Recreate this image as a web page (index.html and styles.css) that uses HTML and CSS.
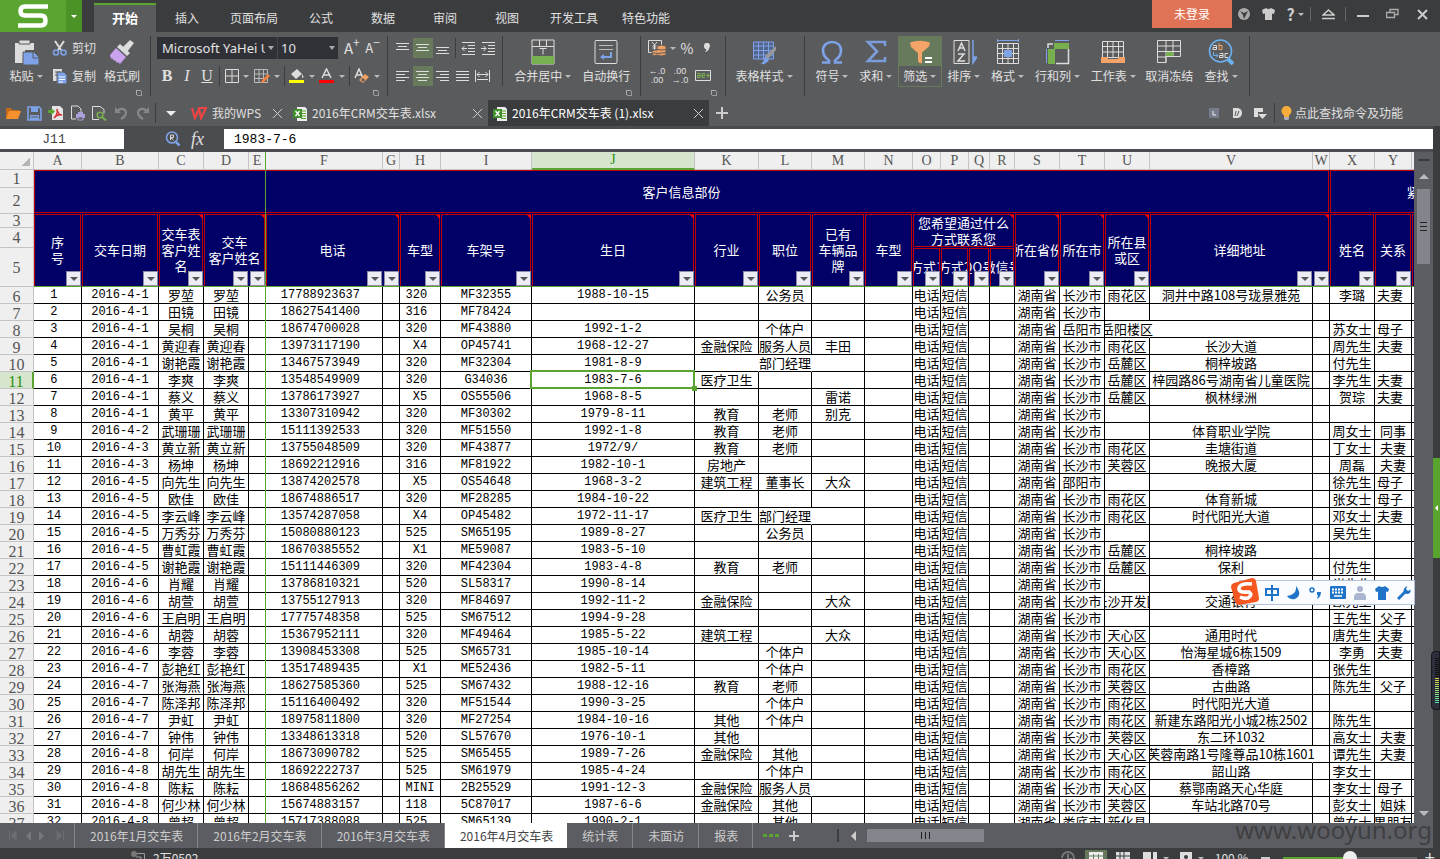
FILE: index.html
```html
<!DOCTYPE html>
<html lang="zh-CN">
<head>
<meta charset="UTF-8">
<meta name="viewport" content="width=device-width, initial-scale=1.0">
<title>2016年CRM交车表 (1).xlsx</title>
<link rel="stylesheet" href="styles.css">
</head>

<body>
<header class="titlebar">
    <button class="logo" aria-label="WPS">
        <svg width="66" height="32" viewBox="0 0 66 32"><path d="M48 6.500H25q-4.500 0-4.500 4.500t4.500 4.500h16q4.500 0 4.500 5t-4.500 5H18" fill="none" stroke="#fff" stroke-width="4.500"/></svg>
        <span class="logo-drop"><i class="arrow"></i></span>
    </button>
    <nav class="menu">
        <a class="active" href="#">开始</a>
        <a href="#">插入</a>
        <a class="wide" href="#">页面布局</a>
        <a href="#">公式</a>
        <a href="#">数据</a>
        <a href="#">审阅</a>
        <a href="#">视图</a>
        <a class="wide" href="#">开发工具</a>
        <a class="wide" href="#">特色功能</a>
    </nav>
    <div class="window-tools">
        <button class="login">未登录</button>
        <button class="w24" aria-label="皮肤"><svg width="12" height="12"><circle cx="6" cy="6" r="6" fill="#aaa"/><path d="M2 3l4 2 4-2-2 4-2 4-1-4z" fill="#3b3c3e"/></svg></button>
        <button class="w24" aria-label="换肤"><svg width="13" height="12"><path d="M4 0q2.500 2 5 0l4 2-1 4-2-.5V12H3V5.500L1 6 0 2z" fill="#ccc"/></svg></button>
        <button class="w30 help" aria-label="帮助">?<i class="arrow"></i></button>
        <i class="sep"></i>
        <button class="w34" aria-label="收起"><svg width="13" height="12"><path d="M1 7l5.500-5L12 7zM0 10.500h13" fill="none" stroke="#ccc" stroke-width="1.600"/></svg></button>
        <i class="sep"></i>
        <button class="w34" aria-label="最小化"><svg width="13" height="12"><path d="M0 8h12" stroke="#ccc" stroke-width="2"/></svg></button>
        <button class="w24" aria-label="还原"><svg width="13" height="12"><path d="M4 4V1.500h8v5H9M.5 4.500h8v5h-8z" fill="none" stroke="#aaa" stroke-width="1.400"/></svg></button>
        <button class="w36" aria-label="关闭"><svg width="11" height="11"><path d="M1 1l9 9M10 1l-9 9" stroke="#ccc" stroke-width="2"/></svg></button>
    </div>
</header>

<section class="ribbon">
    <div class="group clip-group">
        <button class="big w44">
            <svg width="26" height="26"><path d="M2 4h4V1h11v3h4v7h-9v13H2z" fill="#ddd"/><path d="M6 5h11V1H6z" fill="#ddd" stroke="#5a5b5d"/><path d="M10 13h11l5 5v8H10z" fill="#7da2e8" stroke="#5a5b5d"/><path d="M20 13v6h6" fill="none" stroke="#5a5b5d"/></svg>
            <span>粘贴<i class="arrow"></i></span>
        </button>
        <div class="stack">
            <button class="small"><svg width="16" height="16"><path d="M3 1l6 9M12 1L6 10" stroke="#ddd" stroke-width="2"/><circle cx="4" cy="12.500" r="2.500" fill="none" stroke="#7da2e8" stroke-width="1.600"/><circle cx="11.500" cy="12.500" r="2.500" fill="none" stroke="#7da2e8" stroke-width="1.600"/></svg>剪切</button>
            <button class="small"><svg width="16" height="16"><path d="M1 1h9v12H1z" fill="#ddd"/><path d="M3 4h5M3 7h3" stroke="#5a5b5d"/><path d="M5 4h7l3 3v9H5z" fill="#7da2e8" stroke="#5a5b5d"/><path d="M7 9h6M7 11.500h6M7 14h4" stroke="#fff"/></svg>复制</button>
        </div>
        <button class="big w48">
            <svg width="26" height="26"><path d="M21 1l4 3-7 9-5-4z" fill="#ddd"/><path d="M11 5l10 9-3 3L8 8z" fill="#ddd"/><path d="M7 9l10 9-6 7-2-2-1 1-2-3-1 1-2-3-1 1-1-4z" fill="#c9a3ee"/></svg>
            <span>格式刷</span>
        </button>
        <i class="launcher"></i>
    </div>
    <div class="group font-group">
        <div class="line">
            <select class="combo font-name" aria-label="字体"><option>Microsoft YaHei UI</option></select>
            <select class="combo font-size" aria-label="字号"><option>10</option></select>
            <button class="tool grow-font" aria-label="增大字号">A<sup>+</sup></button>
            <button class="tool shrink-font" aria-label="减小字号">A<sup>−</sup></button>
        </div>
        <div class="line">
            <button class="tool letter"><b>B</b></button>
            <button class="tool letter"><em>I</em></button>
            <button class="tool letter"><u>U</u></button>
            <i class="sep"></i>
            <button class="tool drop" aria-label="边框"><svg width="14" height="14"><path d="M.5.5h13v13H.5zM7 0v14M0 7h14" fill="none" stroke="#ddd"/></svg><i class="arrow"></i></button>
            <button class="tool drop" aria-label="绘图边框"><svg width="16" height="15"><path d="M.5.5h13v13H.5zM5 0v14M9.500 0v14M0 5h14M0 9.500h14" fill="none" stroke="#bbb"/><path d="M7 14l1-3 6-6 2 2-6 6z" fill="#f0803c"/></svg><i class="arrow"></i></button>
            <i class="sep"></i>
            <button class="tool drop" aria-label="填充颜色"><svg width="16" height="16"><path d="M2 6l6-5 5 5-6 5z" fill="#ddd"/><path d="M13 6q3 4 0 4z" fill="#ddd"/><path d="M0 12h15v3H0z" fill="#ff0"/></svg><i class="arrow"></i></button>
            <button class="tool drop" aria-label="字体颜色"><svg width="16" height="16"><path d="M3 10L7.500 1 12 10M5 7h5" fill="none" stroke="#ddd" stroke-width="1.500"/><path d="M0 12h15v3H0z" fill="red"/></svg><i class="arrow"></i></button>
            <i class="sep"></i>
            <button class="tool drop" aria-label="清除"><svg width="16" height="16"><path d="M1 10L5 1l4 9M2 7h6" fill="none" stroke="#ddd" stroke-width="1.500"/><path d="M5 12l6-6 4 3-6 6z" fill="#f0a060"/><path d="M7 12l2-2 2 2-2 2z" fill="#5a5b5d"/></svg><i class="arrow"></i></button>
        </div>
        <i class="launcher"></i>
    </div>
    <div class="group align-group">
        <div class="align">
            <div class="line">
                <button class="tool" aria-label="顶端对齐"><svg width="14" height="16"><path d="M0 3.500h13M2 6.500h9M0 9.500h13" stroke="#ddd"/></svg></button>
                <button class="tool on" aria-label="垂直居中"><svg width="14" height="16"><path d="M0 4.500h13M2 7.500h9M0 10.500h13" stroke="#ddd"/></svg></button>
                <button class="tool" aria-label="底端对齐"><svg width="14" height="16"><path d="M0 7.500h13M2 10.500h9M0 13.500h13" stroke="#ddd"/></svg></button>
                <i class="sep"></i>
                <button class="tool" aria-label="减少缩进"><svg width="14" height="14"><path d="M1 1.500h13M7 4.500h7M7 7.500h7M7 10.500h7M1 13.500h13M1 7.500h5M3.500 5L1 7.500 3.500 10" fill="none" stroke="#ddd"/></svg></button>
                <button class="tool" aria-label="增加缩进"><svg width="14" height="14"><path d="M1 1.500h13M7 4.500h7M7 7.500h7M7 10.500h7M1 13.500h13M0 7.500h5M2.500 5L5 7.500 2.500 10" fill="none" stroke="#ddd"/></svg></button>
            </div>
            <div class="line">
                <button class="tool" aria-label="左对齐"><svg width="14" height="12"><path d="M0 1.500h13M0 4.500h9M0 7.500h13M0 10.500h9" stroke="#ddd"/></svg></button>
                <button class="tool on" aria-label="居中"><svg width="14" height="12"><path d="M0 1.500h13M2 4.500h9M0 7.500h13M2 10.500h9" stroke="#ddd"/></svg></button>
                <button class="tool" aria-label="右对齐"><svg width="14" height="12"><path d="M0 1.500h13M4 4.500h9M0 7.500h13M4 10.500h9" stroke="#ddd"/></svg></button>
                <button class="tool" aria-label="两端对齐"><svg width="14" height="12"><path d="M0 1.500h13M0 4.500h13M0 7.500h13M0 10.500h13" stroke="#ddd"/></svg></button>
                <button class="tool" aria-label="分散对齐"><svg width="16" height="12"><path d="M.5 0v12M14.500 0v12M2 4.500h11M4.500 2L2 4.500 4.500 7M10.500 2L13 4.500 10.500 7M2 9.500h11" fill="none" stroke="#ddd"/></svg></button>
            </div>
        </div>
        <i class="sep tall"></i>
        <button class="big w68">
            <svg width="26" height="26"><path d="M2 1h22v24H2z" fill="none" stroke="#ddd"/><path d="M2 7.500h22M9.500 1v6M16.500 1v6M9.500 9.500h7M13 9.500v6" fill="none" stroke="#ddd"/><path d="M2 17h22v8H2z" fill="#78b050"/></svg>
            <span>合并居中<i class="arrow"></i></span>
        </button>
        <button class="big w60">
            <svg width="26" height="26"><rect x="2" y="1.500" width="22" height="23" rx="1" fill="none" stroke="#ddd"/><path d="M6 6.500h14M6 10.500h14" stroke="#bbb"/><path d="M18 13v5H9" fill="none" stroke="#7da2e8" stroke-width="2"/><path d="M11 15l-4 3 4 3z" fill="#7da2e8"/></svg>
            <span>自动换行</span>
        </button>
        <i class="launcher"></i>
    </div>
    <div class="group number-group">
        <div class="line">
            <button class="tool drop" aria-label="货币"><svg width="18" height="17"><path d="M.5.5h13v12H.5z" fill="none" stroke="#ddd"/><path d="M4 2l2.500 3L9 2M6.500 5v5M4.500 6h4M4.500 8h4" stroke="#ddd" fill="none"/><path d="M9 6q4.500-2 9 0v9q-4.500 2-9 0-2 1.500-5 0v-4q2-1 5-1z" fill="#f0a060" stroke="#5a5b5d"/><path d="M9 9.500q4 1 9 0M4 13q7 1 14-.5" fill="none" stroke="#5a5b5d"/></svg><i class="arrow"></i></button>
            <button class="tool percent">%</button>
            <button class="tool comma" aria-label="千位分隔"><svg width="8" height="10"><path d="M1 3a3 3 0 1 1 5 2q0 3-4 4 2-2 1-3-2 0-2-3z" fill="#ddd"/></svg></button>
        </div>
        <div class="line decimals">
            <button class="tool"><span>←.0<br>.00</span></button>
            <button class="tool"><span>.00<br>→.0</span></button>
            <button class="tool" aria-label="ae"><svg width="17" height="12"><path d="M.5.5h15v10H.5z" fill="none" stroke="#ddd"/><path d="M2 3.500h3v4H2.500v-2H5M10 7.500H7v-4h2.500v2H7M11 5.500h4M13 3.500v4" fill="none" stroke="#78b050"/></svg></button>
        </div>
        <i class="launcher"></i>
    </div>
    <div class="group style-group">
        <button class="big w68">
            <svg width="26" height="26"><path d="M2.500 3h20v17h-20zM2.500 7h20M2.500 11.500h20M2.500 16h20M7.500 3v17M12.500 3v17M17.500 3v17" fill="#54658c" stroke="#7da2e8"/><path d="M25 7v4l-8 9-3-3z" fill="#999"/><path d="M14 17l4 4q-3 5-8 4 3-2 4-8z" fill="#7da2e8"/></svg>
            <span>表格样式<i class="arrow"></i></span>
        </button>
    </div>
    <div class="group edit-group">
        <button class="big w44"><svg width="26" height="26"><path d="M3 23.500h7v-2C5 18 4 15 4 11.500 4 6 8 3 13 3s9 3 9 8.500c0 3.500-1 6.500-6 10v2h7" fill="none" stroke="#7da2e8" stroke-width="2.600"/></svg><span>符号<i class="arrow"></i></span></button>
        <button class="big w44"><svg width="26" height="26"><path d="M22 7V3H5l9 9.500L5 22h17v-4" fill="none" stroke="#7c9ddb" stroke-width="2.600"/></svg><span>求和<i class="arrow"></i></span></button>
        <button class="big w44 picked"><svg width="26" height="26"><path d="M3 3.500q10-3.500 20 0l-1 4-7 6V24q-3 1-4-2v-8L4 8z" fill="#f4a468"/><path d="M18 19h7M18 23h7" stroke="#fff" stroke-width="2"/></svg><span>筛选<i class="arrow"></i></span></button>
        <button class="big w44"><svg width="26" height="26"><path d="M3 1.500h15v23H3z" fill="none" stroke="#ddd"/><path d="M7 12l3.500-8L14 12M8 9h5M7 15h6l-6 7h7" fill="none" stroke="#ddd" stroke-width="1.500"/><path d="M22 1v23M22 24v-6h4z" fill="#7da2e8" stroke="#7da2e8" stroke-width="1.500"/></svg><span>排序<i class="arrow"></i></span></button>
        <button class="big w44"><svg width="26" height="26"><path d="M2.500 4.500h21v20h-21zM2.500 9.500h21M2.500 14.500h21M2.500 19.500h21M7.500 4.500v20M13 4.500v20M18.500 4.500v20" fill="none" stroke="#ddd"/><path d="M2 1.500h22M2.500 0v3M23.500 0v3" stroke="#7da2e8"/><path d="M9 11h8v7H9z" fill="#7da2e8"/></svg><span>格式<i class="arrow"></i></span></button>
        <button class="big w56"><svg width="26" height="26"><path d="M11 1.500h14M2.500 10v14" stroke="#7da2e8"/><path d="M10 4h15v6H10zM4 10h7v15H4z" fill="#78b050"/><path d="M4 9V5h5M24.500 10v14.500H12" fill="none" stroke="#ddd" stroke-width="1.500"/></svg><span>行和列<i class="arrow"></i></span></button>
        <button class="big w56"><svg width="26" height="26"><path d="M2.500 2.500h21v16h-21zM2.500 7.500h21M2.500 13h21M7.500 2.500v16M13 2.500v16M18.500 2.500v16" fill="none" stroke="#ddd"/><path d="M1 18h7v2h10v-2h7v6H1z" fill="#f4a468"/></svg><span>工作表<i class="arrow"></i></span></button>
        <button class="big w56"><svg width="26" height="26"><path d="M1.500 1.500h23v16H10v6H1.500zM1.500 7h23M1.500 12.500h23M1.500 18H10M10 1.500v22M17 1.500v16" fill="none" stroke="#ddd"/><path d="M10 13h7v4h-7z" fill="#78b050"/></svg><span>取消冻结</span></button>
        <button class="big w48"><svg width="26" height="26"><circle cx="12.500" cy="12" r="11" fill="none" stroke="#6cb0f0" stroke-width="1.600"/><path d="M20 20l5 5" stroke="#6cb0f0" stroke-width="4"/><path d="M5 6.500h3.500v4H5v-2h3.500" fill="none" stroke="#ddd"/><path d="M11 4v6.500h3v-4h-3" fill="none" stroke="#f4a468"/><path d="M5.500 13v3.500h4M8 14.500l2 2-2 2" fill="none" stroke="#6cb0f0"/><path d="M11.500 14.500h3.500v4h-3.500v-2h3.500M20 14.500h-3v4h3" fill="none" stroke="#ddd"/></svg><span>查找<i class="arrow"></i></span></button>
    </div>
</section>

<section class="docbar">
    <div class="quick">
        <button aria-label="打开"><svg width="16" height="14"><path d="M1 12V2h5l1 2h7v2" fill="#c46a1c"/><path d="M4 5h12l-3 8H1z" fill="#f5922f"/></svg></button>
        <button aria-label="保存"><svg width="15" height="15"><path d="M1 1h11l2 2v11H1z" fill="none" stroke="#7da2e8" stroke-width="1.600"/><path d="M4 1h7v5H4zM3 9h9v5H3z" fill="#7da2e8"/><path d="M4 11h7" stroke="#5a5b5d"/></svg></button>
        <button aria-label="输出PDF"><svg width="16" height="16"><path d="M4 1h8l3 3v11H4z" fill="#e4e4e4"/><path d="M6 13q4-4 3-9 1 6 5 6-5-1-8 3" fill="none" stroke="#d43030" stroke-width="1.400"/><path d="M0 5h3V3l4 3.500L3 10V8H0z" fill="#5aa52f"/></svg></button>
        <button aria-label="打印"><svg width="16" height="16"><path d="M6 14H1.500v-13H8l3 3v3" fill="none" stroke="#ddd"/><path d="M6 9h9v4H6zM8 7h5v2H8z" fill="#a9a0dc"/><path d="M8 12h5v3H8z" fill="#5a5b5d" stroke="#a9a0dc"/></svg></button>
        <button aria-label="打印预览"><svg width="16" height="16"><path d="M8 14.500H1.500v-13H9l4 3v4" fill="none" stroke="#ddd"/><circle cx="9" cy="10" r="2.800" fill="none" stroke="#78b050" stroke-width="1.600"/><path d="M11 12l4 3.500" stroke="#78b050" stroke-width="2"/></svg></button>
        <button aria-label="撤销"><svg width="14" height="14"><path d="M1 1v6h6z" fill="#85868a"/><path d="M3 5q4-4 8-1 3 5-4 9" fill="none" stroke="#85868a" stroke-width="2.400"/></svg></button>
        <button aria-label="恢复"><svg width="14" height="14"><path d="M13 1v6H7z" fill="#85868a"/><path d="M11 5Q7 1 3 4q-3 5 4 9" fill="none" stroke="#85868a" stroke-width="2.400"/></svg></button>
        <i class="sep"></i>
        <button class="more" aria-label="更多"><i class="arrow big-arrow"></i></button>
    </div>
    <div class="doc home">
        <svg width="17" height="13"><path d="M1 1l3 10 4-9 2 9 5-10H7" fill="none" stroke="#ee4444" stroke-width="2.200"/></svg>
        <a href="#">我的WPS</a>
        <button class="close" aria-label="关闭"></button>
    </div>
    <div class="doc">
        <svg width="15" height="15"><path d="M4 1h8l2 2v12H4z" fill="#eee"/><path d="M8 5h5M8 7.500h5M8 10h5M8 12.500h5" stroke="#5aa52f"/><path d="M0 3h9v9H0z" fill="#3f8f2a"/><path d="M2.500 5l4 5M6.500 5l-4 5" stroke="#fff" stroke-width="1.300"/></svg>
        <a href="#">2016年CRM交车表.xlsx</a>
        <button class="close" aria-label="关闭"></button>
    </div>
    <div class="doc current">
        <svg width="15" height="15"><path d="M4 1h8l2 2v12H4z" fill="#eee"/><path d="M8 5h5M8 7.500h5M8 10h5M8 12.500h5" stroke="#5aa52f"/><path d="M0 3h9v9H0z" fill="#3f8f2a"/><path d="M2.500 5l4 5M6.500 5l-4 5" stroke="#fff" stroke-width="1.300"/></svg>
        <a href="#">2016年CRM交车表 (1).xlsx</a>
        <button class="close" aria-label="关闭"></button>
    </div>
    <button class="add" aria-label="新建"><svg width="12" height="12"><path d="M6 0v12M0 6h12" stroke="#ccc" stroke-width="2"/></svg></button>
    <div class="doc-tools">
        <button aria-label="文档"><svg width="10" height="10"><path d="M0 0h10v10H0z" fill="#777c8c"/><path d="M4 3v4h3" fill="none" stroke="#eee"/></svg></button>
        <button aria-label="Docer"><svg width="9" height="10"><path d="M0 0h5q4 1 4 5t-4 5H0z" fill="#ddd"/><path d="M2 8l1-5M4 8l2-5" stroke="#5a5b5d"/></svg></button>
        <button aria-label="窗口"><svg width="13" height="11"><path d="M0 0h9v4H4v5H0z" fill="#ddd"/><path d="M4 6h9l-4.500 5z" fill="#ddd"/></svg></button>
        <i class="sep"></i>
        <a class="tip" href="#"><svg width="11" height="15"><circle cx="5.500" cy="5" r="5" fill="#f7ac3c"/><path d="M3 8h5v3H3z" fill="#f7ac3c"/><path d="M3 11h5v2l-1 1H4l-1-1z" fill="#aab"/></svg>点此查找命令及功能</a>
    </div>
</section>

<div class="main">
    <div class="book">
        <div class="formula-bar">
            <input class="name-box" aria-label="名称框" value="J11">
            <div class="formula-tools">
                <svg width="16" height="16"><circle cx="7" cy="6.500" r="5.500" fill="none" stroke="#7da2e8" stroke-width="1.600"/><path d="M11 11l3.500 3.500" stroke="#7da2e8" stroke-width="2.500"/><path d="M5.500 9V4h3v2.500h-3l3 2.500" fill="none" stroke="#ddd"/></svg>
                <em>fx</em>
            </div>
            <input class="formula" aria-label="编辑栏" value="1983-7-6">
        </div>

        <div class="work">
            <div class="sheet">
                <table>
                    <colgroup>
                        <col class="c34"><col class="c48"><col class="c77"><col class="c45"><col class="c45"><col class="c17"><col class="c117"><col class="c17"><col class="c41"><col class="c91"><col class="c163"><col class="c64"><col class="c53"><col class="c53"><col class="c48"><col class="c28"><col class="c28"><col class="c21"><col class="c25"><col class="c45"><col class="c45"><col class="c45"><col class="c163"><col class="c17"><col class="c45"><col class="c37"><col class="c85">
                    </colgroup>
                    <thead>
                        <tr class="letters"><th class="corner"></th><th>A</th><th>B</th><th>C</th><th>D</th><th>E</th><th>F</th><th>G</th><th>H</th><th>I</th><th class="sel">J</th><th>K</th><th>L</th><th>M</th><th>N</th><th>O</th><th>P</th><th>Q</th><th>R</th><th>S</th><th>T</th><th>U</th><th>V</th><th>W</th><th>X</th><th>Y</th><th></th></tr>
                        <tr class="r1"><th class="no">1</th><td class="head title" colspan="23" rowspan="2">客户信息部份</td><td class="head title" colspan="3" rowspan="2">紧</td></tr>
                        <tr class="r2"><th class="no">2</th></tr>
                        <tr class="r3">
                            <th class="no">3</th>
                            <td class="head" rowspan="3">序<br>号<div class="filters"><button></button></div></td>
                            <td class="head" rowspan="3">交车日期<div class="filters"><button></button></div></td>
                            <td class="head note" rowspan="3">交车表<br>客户姓<br>名<div class="filters"><button></button></div></td>
                            <td class="head note" rowspan="3" colspan="2">交车<br>客户姓名<div class="filters"><button></button><button></button></div></td>
                            <td class="head note" rowspan="3" colspan="2">电话<div class="filters"><button></button><button></button></div></td>
                            <td class="head note" rowspan="3">车型<div class="filters"><button></button></div></td>
                            <td class="head note" rowspan="3">车架号<div class="filters"><button></button></div></td>
                            <td class="head note" rowspan="3">生日<div class="filters"><button></button></div></td>
                            <td class="head" rowspan="3">行业<div class="filters"><button></button></div></td>
                            <td class="head" rowspan="3">职位<div class="filters"><button></button></div></td>
                            <td class="head" rowspan="3">已有<br>车辆品<br>牌<div class="filters"><button></button></div></td>
                            <td class="head" rowspan="3">车型<div class="filters"><button></button></div></td>
                            <td class="head note title" rowspan="2" colspan="4">您希望通过什么<br>方式联系您</td>
                            <td class="head note" rowspan="3"><span class="clip">所在省份</span><div class="filters"><button></button></div></td>
                            <td class="head note" rowspan="3">所在市<div class="filters"><button></button></div></td>
                            <td class="head note" rowspan="3">所在县<br>或区<div class="filters"><button></button></div></td>
                            <td class="head note" rowspan="3" colspan="2">详细地址<div class="filters"><button></button><button></button></div></td>
                            <td class="head" rowspan="3">姓名<div class="filters"><button></button></div></td>
                            <td class="head" rowspan="3">关系<div class="filters"><button></button></div></td>
                            <td class="head" rowspan="3"></td>
                        </tr>
                        <tr class="r4"><th class="no">4</th></tr>
                        <tr class="r5">
                            <th class="no">5</th>
                            <td class="head"><span class="clip">方式1</span><div class="filters"><button></button></div></td>
                            <td class="head"><span class="clip">方式2</span><div class="filters"><button></button></div></td>
                            <td class="head"><span class="clip">QQ号</span><div class="filters"><button></button></div></td>
                            <td class="head"><span class="clip">微信号</span><div class="filters"><button></button></div></td>
                        </tr>
                    </thead>
                    <tbody id="rows"></tbody>
                </table>
                <div class="freeze"></div>
            </div>
            <div class="vscroll">
                <i class="split"></i>
                <i class="up"></i>
                <div class="thumb"><i></i><i></i><i></i></div>
                <i class="down"></i>
            </div>
        </div>

        <div class="sheetbar">
            <div class="sheet-nav"><svg width="74" height="25"><path d="M9.500 8v9M16 8v9l-5-4.500zM63.500 8v9M57 8v9l5-4.500z" fill="#6c6d71" stroke="#6c6d71"/><path d="M31 8v10l-5-5zM39 8v10l5-5z" fill="#77787c"/></svg></div>
            <a href="#">2016年1月交车表</a>
            <a href="#">2016年2月交车表</a>
            <a href="#">2016年3月交车表</a>
            <a class="current" href="#">2016年4月交车表</a>
            <a href="#">统计表</a>
            <a href="#">未面访</a>
            <a href="#">报表</a>
            <button class="dots" aria-label="更多工作表"><i></i><i></i><i></i></button>
            <button class="add-sheet" aria-label="新建工作表"><svg width="10" height="10"><path d="M5 0v10M0 5h10" stroke="#ccc" stroke-width="2"/></svg></button>
            <i class="grip"></i>
            <i class="left"></i>
            <div class="hthumb"><i></i><i></i><i></i></div>
        </div>
    </div>
    <aside class="dock"><button class="dock-tab" aria-label="展开"><i></i></button></aside>
</div>

<footer class="statusbar">
    <svg width="14" height="12"><circle cx="3" cy="4" r="3" fill="#777"/><path d="M6 3.500h7.500V12M5 7h5v5" fill="none" stroke="#999"/></svg>
    <span class="sum">2万0502</span>
    <div class="views">
        <svg width="16" height="16"><path d="M2 8a6 6 0 1 1 6 6M8 4v5h4" fill="none" stroke="#77787a" stroke-width="2"/></svg>
        <button class="on" aria-label="普通视图"><svg width="14" height="12"><path d="M0 0h14v12H0z" fill="#eee"/><path d="M4.500 2v10M9.500 2v10M0 4h14M0 8h14" stroke="#6d8060"/></svg></button>
        <button aria-label="分页预览"><svg width="14" height="12"><path d="M0 0h14v12H0z" fill="#ddd"/><path d="M4 0v12M8 0v12M0 4h14M0 8h14" stroke="#3b3c3e"/></svg></button>
        <button class="drop" aria-label="阅读"><svg width="14" height="12"><path d="M0 0h8v12H0zM10 0h4v12h-4z" fill="#ddd"/></svg><i class="arrow"></i></button>
        <button class="drop" aria-label="护眼"><svg width="12" height="12"><path d="M0 0h12v12H0z" fill="#ddd"/><circle cx="6" cy="5" r="2" fill="#3b3c3e"/></svg><i class="arrow"></i></button>
        <span class="zoom">100 %</span>
        <i class="minus"></i>
        <input type="range" aria-label="缩放" min="0" max="100" value="50">
        <i class="plus">+</i>
    </div>
</footer>

<div class="ime">
    <svg class="ime-logo" width="30" height="28"><path d="M4 5L22 0q3 0 4 3l3 17q0 3-3 4L9 27q-3 0-4-3L1 9q0-3 3-4z" fill="#f4571f"/><path d="M22 6q-12-1-13 4t10 4q4 3-1 6-4 1-8-1" fill="none" stroke="#fff" stroke-width="3.600"/></svg>
    <button aria-label="中文"><svg width="14" height="16"><path d="M1 4h12v6H1zM7 0v16" fill="none" stroke="#1f74c8" stroke-width="2"/></svg></button>
    <button aria-label="月亮"><svg width="14" height="14"><path d="M9 0q1 9-9 10 3 4 8 3 8-4 1-13z" fill="#1f74c8"/></svg></button>
    <button aria-label="标点"><svg width="14" height="14"><circle cx="3" cy="4" r="2" fill="none" stroke="#1f74c8" stroke-width="1.500"/><path d="M8 6h4q0 5-4 7l1-4H8z" fill="#1f74c8"/></svg></button>
    <button aria-label="键盘"><svg width="16" height="13"><rect width="16" height="13" rx="1" fill="#1f74c8"/><path d="M2 3.500h12M2 6.500h12" stroke="#fff" stroke-width="2" stroke-dasharray="2 1"/><path d="M4 10h8" stroke="#fff" stroke-width="1.500"/></svg></button>
    <button aria-label="用户"><svg width="12" height="14"><circle cx="6" cy="3" r="3" fill="#aab6d0"/><path d="M0 14V11q0-3 3-4h6q3 1 3 4v3z" fill="#aab6d0"/></svg></button>
    <button aria-label="皮肤"><svg width="14" height="14"><path d="M4 0q3 2 6 0l4 3-1 3-2-.5V14H3V5.500L1 6 0 3z" fill="#1f74c8"/></svg></button>
    <button aria-label="工具"><svg width="14" height="14"><path d="M1 13l7-7" stroke="#1f74c8" stroke-width="3"/><path d="M10.500.5L9 3l2 2 2.500-1.500q.5 4-3 4.500-4 0-4-3.500 1-4 4-4z" fill="#1f74c8"/></svg></button>
</div>
<div class="meter"><i class="idle"></i><i class="level"></i></div>
<div class="watermark">www.wooyun.org</div>
<script src="sheet.js"></script>
</body>
</html>
```
FILE: styles.css
```css
* { box-sizing: border-box; }
body {
    margin: 0; height: 100vh; overflow: hidden; position: relative;
    display: flex; flex-direction: column;
    background: #3b3c3e; color: #e0e0e0;
    font: 12px/16px "Noto Sans CJK SC", sans-serif;
}
button { font: inherit; color: inherit; background: none; border: 0; padding: 0; margin: 0; }
a { color: inherit; text-decoration: none; }
svg { display: block; flex: none; }
.arrow { display: inline-block; border: 3px solid transparent; border-top-color: #bbb; border-bottom: 0; }
.sep { width: 1px; height: 20px; margin: 0 2px; background: #3b3c3e; flex: none; }
.w24 { width: 24px; }
.w30 { width: 30px; }
.w34 { width: 34px; }
.w36 { width: 36px; }
.w44 { width: 44px; }
.w48 { width: 48px; }
.w56 { width: 56px; }
.w60 { width: 60px; }
.w68 { width: 68px; }

/* title bar */
.titlebar { display: flex; height: 32px; flex: none; }
.logo { display: flex; width: 82px; background: #5aa52f; }
.logo-drop { display: flex; align-items: center; justify-content: center; width: 16px; height: 32px; background: #4c9327; }
.logo-drop .arrow { border-top-color: #fff; }
.menu { display: flex; margin-left: 12px; padding-top: 3px; }
.menu a { width: 62px; text-align: center; line-height: 30px; }
.menu a.wide { width: 72px; }
.menu a.active { background: #5a5b5d; border-top: 2px solid #5aa52f; font-weight: bold; font-size: 13px; line-height: 26px; color: #fff; }
.window-tools { display: flex; align-items: center; height: 28px; margin-left: auto; }
.window-tools button { display: flex; align-items: center; justify-content: center; }
.window-tools .login { width: 80px; height: 28px; background: #e07355; color: #fff; }
.window-tools .sep { height: 14px; background: #66676a; margin: 0; }
.help { font-weight: bold; font-size: 16px; color: #ccc; gap: 3px; }

/* ribbon */
.ribbon { display: flex; height: 68px; flex: none; padding-top: 4px; background: #5a5b5d; }
.group { display: flex; position: relative; height: 60px; padding: 0 4px; border-right: 1px solid #3b3c3e; }
.launcher { position: absolute; right: 9px; bottom: 1px; width: 5px; height: 5px; border: 1px solid #aaa; border-width: 1px 0 0 1px; box-shadow: 1px 1px 0 #999; }
.big { display: flex; flex-direction: column; align-items: center; height: 51px; padding-top: 3px; white-space: nowrap; }
.big span { display: flex; align-items: center; gap: 3px; margin-top: 3px; }
.picked { background: #677a5b; border: 1px solid #677a5b; padding-top: 2px; }
.picked span { align-self: stretch; justify-content: center; background: #5a5b5d; height: 21px; margin-top: 1px; }
.clip-group { width: 151px; }
.stack { display: flex; flex-direction: column; gap: 12px; width: 50px; padding: 4px 0 0 4px; }
.small { display: flex; gap: 4px; align-items: center; height: 16px; white-space: nowrap; }
.line { display: flex; align-items: center; height: 24px; }
.line + .line { margin-top: 4px; }
.font-group { display: block; width: 237px; padding-left: 6px; }
.combo {
    appearance: none; height: 22px; border: 0; border-radius: 0; padding: 0 12px 0 5px;
    background: #303136 url("data:image/svg+xml,%3Csvg xmlns='http://www.w3.org/2000/svg' width='6' height='4'%3E%3Cpath d='M0 0h6L3 4z' fill='%23aaa'/%3E%3C/svg%3E") right 3px center no-repeat;
    color: #e4e4e4; font: 13px "Noto Sans", sans-serif;
}
.font-name { width: 121px; border-right: 1px solid #45464a; }
.font-size { width: 61px; padding-left: 3px; }
.tool { display: flex; align-items: center; justify-content: center; width: 20px; height: 20px; }
.tool.on { background: #677a5b; }
.tool.drop { width: 30px; gap: 4px; }
.tool sup { font-size: 12px; line-height: 8px; align-self: flex-start; }
.grow-font { width: 21px; margin-left: 3px; font-size: 15px; }
.shrink-font { width: 21px; font-size: 13px; }
.letter { font: 16px "Liberation Serif", serif; }
.align-group { padding: 0 4px 0 5px; width: 253px; }
.align { width: 108px; }
.sep.tall { height: 50px; margin: 0 6px 0 2px; }
.number-group { display: block; width: 85px; padding-left: 6px; }
.percent { font-size: 14px; }
.decimals .tool { font: 9px/9px "Liberation Sans", sans-serif; }
.decimals { gap: 3px; }
.style-group { width: 79px; }
.edit-group { width: 445px; padding: 0 4px 0 5px; }

/* quick access and document tabs */
.docbar { display: flex; height: 26px; flex: none; background: #5a5b5d; }
.quick { display: flex; align-items: center; width: 184px; padding-left: 2px; flex: none; }
.quick button { display: flex; justify-content: center; width: 22px; }
.quick .more { width: 26px; }
.big-arrow { border-width: 5px; border-top-color: #eee; border-bottom: 0; }
.doc { display: flex; align-items: center; gap: 4px; width: 200px; padding: 0 6px 0 5px; white-space: nowrap; }
.doc.home { width: 104px; padding-left: 7px; }
.doc.current { width: 221px; background: #3b3c3e; color: #fff; }
.close { margin-left: auto; width: 9px; height: 9px; background: linear-gradient(45deg, transparent 45%, #ccc 45%, #ccc 55%, transparent 55%), linear-gradient(-45deg, transparent 45%, #ccc 45%, #ccc 55%, transparent 55%); }
.add { padding: 0 7px; }
.doc-tools { display: flex; align-items: center; margin-left: auto; padding-right: 37px; }
.doc-tools button { display: flex; justify-content: center; width: 23px; }
.tip { display: flex; align-items: center; gap: 3px; padding-left: 4px; }

/* workbook */
.main { display: flex; flex: 1; min-height: 0; }
.book { display: flex; flex-direction: column; flex: 1; min-width: 0; }
.formula-bar { display: flex; height: 26px; flex: none; padding: 3px 0; background: #4b4c50; }
.formula-bar input { border: 0; padding: 0; height: 20px; background: #fff; font: 13px "Liberation Mono", monospace; color: #000; outline: 0; }
.formula-bar .name-box { width: 124px; padding-right: 16px; text-align: center; color: #444; }
.formula-bar .formula { flex: 1; padding-left: 10px; }
.formula-tools { display: flex; align-items: center; gap: 10px; width: 100px; padding-left: 41px; }
.formula-tools em { font: italic 18px "Liberation Serif", serif; }
.work { display: flex; flex: 1; min-height: 0; }
.sheet { position: relative; flex: 1; overflow: hidden; background: #fff; color: #000; }
.freeze { position: absolute; left: 265px; top: 0; bottom: 0; width: 1px; background: #5aa52f; }

table { table-layout: fixed; width: 0; border-collapse: separate; border-spacing: 0; }
.c17 { width: 17px; }
.c21 { width: 21px; }
.c25 { width: 25px; }
.c28 { width: 28px; }
.c34 { width: 34px; }
.c37 { width: 37px; }
.c41 { width: 41px; }
.c45 { width: 45px; }
.c48 { width: 48px; }
.c53 { width: 53px; }
.c64 { width: 64px; }
.c77 { width: 77px; }
.c85 { width: 85px; }
.c91 { width: 91px; }
.c117 { width: 117px; }
.c163 { width: 163px; }
th, td { padding: 0; text-align: center; white-space: nowrap; }
th { background: #efefef; color: #555; font: 16px/13px "Liberation Serif", serif; border: 0 solid #c4c4c4; border-width: 0 1px 1px 0; }
.letters th { height: 18px; font-size: 14px; line-height: 17px; }
.letters .sel { background: #d6e5cd; color: #2f9010; border-bottom: 2px solid #5aa52f; line-height: 16px; }
.letters .corner { background: linear-gradient(135deg, transparent 50%, #b4b4b4 50%) 21px 5px / 9px 9px no-repeat #efefef; }
tbody .no { vertical-align: bottom; }
.sel-row .no { background: #d6e5cd; color: #2f9010; border-right: 2px solid #5aa52f; }
.r1 { height: 18px; }
.r2 { height: 26px; }
.r3 { height: 14px; }
.r4 { height: 20px; }
.r5 { height: 39px; }

/* navy header cells with the doubled red rule */
.head {
    position: relative; background: #006; color: #fff; font-size: 13px; line-height: 16px;
    border: 0 solid #006; border-right-width: 1px; border-bottom: 1px solid #5aa52f;
    box-shadow: inset 1px 0 #c00000, inset -1px 0 #c00000, inset 0 1px #c00000;
}
.head.title { border-bottom-color: #006; box-shadow: inset 0 0 0 1px #c00000; }
.note::after { content: ""; position: absolute; right: 0; top: 1px; border: 2px solid red; border-left-color: transparent; border-bottom-color: transparent; }
.clip { display: flex; justify-content: center; overflow: hidden; margin: 0 1px; }
.filters { position: absolute; right: 0; bottom: 0; display: flex; gap: 2px; }
.filters button { display: flex; align-items: center; justify-content: center; width: 15px; height: 15px; background: #ececf4; border: 1px solid #8c8ca4; }
.filters button::after { content: ""; border: 4px solid transparent; border-top-color: #555; border-bottom: 0; }

tbody td { position: relative; border: 0 solid #000; border-width: 0 1px 1px 0; font-size: 13px; }
tbody span { display: flex; justify-content: center; height: 16px; line-height: 16px; overflow: hidden; white-space: pre; }
tbody .num { font: 12px/17px "Liberation Mono", monospace; }
tbody .spill { border-right-color: #fff; z-index: 1; }
tbody .spill span { overflow: visible; clip-path: inset(0 -60px 0 0); }
.cursor::after { content: ""; position: absolute; inset: -2px -1px -1px -2px; border: 2px solid #5aa52f; z-index: 1; }
.cursor::before { content: ""; position: absolute; right: -3px; bottom: -3px; width: 5px; height: 5px; background: #5aa52f; z-index: 2; }

.vscroll { display: flex; flex-direction: column; align-items: center; width: 19px; flex: none; padding: 7px 3px; background: #5c5d62; }
.vscroll .split { width: 12px; height: 2px; background: #3b3c3e; }
.up { margin: 13px 0 10px; border: 5px solid transparent; border-bottom-color: #bbb; border-top: 0; }
.down { margin-top: auto; border: 5px solid transparent; border-top-color: #bbb; border-bottom: 0; }
.thumb { display: flex; flex-direction: column; align-items: center; justify-content: center; gap: 3px; width: 13px; height: 75px; background: #84858c; }
.thumb i { width: 7px; height: 1px; background: #222; }

.sheetbar { display: flex; height: 25px; flex: none; background: #5c5d62; color: #ccc; line-height: 25px; }
.sheet-nav { width: 75px; border-right: 1px solid #85868a; }
.sheetbar a { padding: 0 14px 0 15px; border-right: 1px solid #85868a; }
.sheetbar a.current { background: #fff; color: #444; border-right: 0; }
.dots { display: flex; align-items: center; gap: 2px; margin-left: 10px; }
.dots i { width: 4px; height: 3px; background: #5aa52f; }
.add-sheet { margin: 0 38px 0 10px; }
.grip { width: 2px; height: 13px; margin: 6px 12px 0 0; background: #3b3c3e; }
.left { height: 0; margin: 8px 11px 0 0; border: 5px solid transparent; border-right-color: #ccc; border-left: 0; }
.hthumb { display: flex; align-items: center; justify-content: center; gap: 3px; width: 117px; height: 13px; margin-top: 6px; background: #84858c; }
.hthumb i { width: 1px; height: 7px; background: #222; }

.dock { display: flex; flex-direction: column; width: 7px; flex: none; background: #3b3c3e; padding-top: 332px; }
.dock-tab { display: flex; align-items: center; justify-content: center; width: 7px; height: 100px; background: #5aa52f; }
.dock-tab i { border: 3px solid transparent; border-right-color: #fff; border-left: 0; }

/* status bar, only its top shows */
.statusbar { display: flex; align-items: flex-start; height: 11px; flex: none; overflow: hidden; padding: 2px 5px 0 131px; background: #3b3c3e; }
.sum { margin-left: 8px; }
.views { display: flex; align-items: flex-start; gap: 13px; margin-left: auto; }
.views button { padding: 2px 4px; margin: 0 -4px; }
.views .drop { display: flex; align-items: center; gap: 6px; padding-right: 0; margin-right: -2px; }
.views .on { background: #677a5b; }
.minus { width: 9px; height: 2px; margin-top: 7px; background: #ccc; }
.plus { font: 18px/16px "Liberation Sans", sans-serif; margin-left: -6px; }
.views input { appearance: none; width: 134px; height: 14px; margin: 1px 0 0; background: linear-gradient(90deg, #5aa52f 50%, #66676a 50%) 0 6px / 100% 2px no-repeat; }
.views input::-webkit-slider-thumb { appearance: none; width: 14px; height: 14px; border-radius: 50%; background: #eee; }

/* floating over the window */
.ime { position: absolute; right: 25px; bottom: 254px; z-index: 3; display: flex; align-items: center; height: 25px; width: 176px; padding-left: 21px; background: #fafcff; border: 1px solid #b4c4dc; }
.ime button { display: flex; justify-content: center; width: 22px; flex: none; }
.ime-logo { position: absolute; left: -10px; top: -3px; }
.meter { position: absolute; right: 0; top: 651px; z-index: 3; width: 9px; height: 59px; padding: 6px 0 0 3px; border: 1px solid #15161c; border-radius: 4px 0 0 4px; background: #2c2e3c; }
.meter i { display: block; width: 4px; }
.idle { height: 20px; background: repeating-linear-gradient(#111 0 1px, transparent 1px 2px); }
.level { height: 26px; background: repeating-linear-gradient(transparent 0 1px, #2c2e3c 1px 2px), linear-gradient(#e0d040, #50e0b0); }
.watermark { position: absolute; right: 8px; bottom: 11px; z-index: 3; font: 24px/36px "Noto Sans", sans-serif; color: rgba(50, 50, 50, .7); }
```
FILE: sheet.js
```js
// date, name, phone, model, frame no, birthday, trade, job, brand, city, district, address, contact, relation
// a leading ">" lets the text run over the right border
var records = [
  '2016-4-1,罗堃,17788923637,320,MF32355,1988-10-15,,公务员,,长沙市,雨花区,洞井中路108号珑景雅苑,李璐,夫妻  ',
  '2016-4-1,田镜,18627541400,316,MF78424,,,,,长沙市,,,,',
  '2016-4-1,吴桐,18674700028,320,MF43880,1992-1-2,,个体户,,岳阳市,>岳阳楼区,,苏女士,母子  ',
  '2016-4-1,黄迎春,13973117190,X4,OP45741,1968-12-27,金融保险,服务人员,丰田,长沙市,雨花区,长沙大道,周先生,夫妻  ',
  '2016-4-1,谢艳霞,13467573949,320,MF32304,1981-8-9,>,>部门经理,,长沙市,岳麓区,桐梓坡路,付先生,',
  '2016-4-1,李爽,13548549909,320,G34036,1983-7-6,医疗卫生,,,长沙市,岳麓区,梓园路86号湖南省儿童医院,李先生,夫妻  ',
  '2016-4-1,蔡义,13786173927,X5,OS55506,1968-8-5,,,雷诺,长沙市,岳麓区,枫林绿洲,贺琮,夫妻  ',
  '2016-4-1,黄平,13307310942,320,MF30302,1979-8-11,教育,老师,别克,长沙市,,,,',
  '2016-4-2,武珊珊,15111392533,320,MF51550,1992-1-8,教育,老师,,长沙市,,体育职业学院,周女士,同事',
  '2016-4-3,黄立新,13755048509,320,MF43877,1972/9/,教育,老师,,长沙市,雨花区,圭塘街道,丁女士,夫妻',
  '2016-4-3,杨坤,18692212916,316,MF81922,1982-10-1,房地产,,,长沙市,芙蓉区,晚报大厦,周磊,夫妻',
  '2016-4-5,向先生,13874202578,X5,OS54648,1968-3-2,建筑工程,董事长,大众,邵阳市,,,徐先生,母子  ',
  '2016-4-5,欧佳,18674886517,320,MF28285,1984-10-22,,,,长沙市,雨花区,体育新城,张女士,母子  ',
  '2016-4-5,李云峰,13574287058,X4,OP45482,1972-11-17,医疗卫生,>部门经理,,长沙市,雨花区,时代阳光大道,邓女士,夫妻  ',
  '2016-4-5,万秀芬,15080880123,525,SM65195,1989-8-27,,公务员,,长沙市,,,吴先生,',
  '2016-4-5,曹虹霞,18670385552,X1,ME59087,1983-5-10,,,,长沙市,岳麓区,桐梓坡路,,',
  '2016-4-5,谢艳霞,15111446309,320,MF42304,1983-4-8,教育,老师,,长沙市,岳麓区,保利,付先生,',
  '2016-4-6,肖耀,13786810321,520,SL58317,1990-8-14,,,,长沙市,,,肖先生,',
  '2016-4-6,胡萱,13755127913,320,MF84697,1992-11-2,金融保险,,大众,长沙市,长沙开发区,交通银行,欧先生,',
  '2016-4-6,王启明,17775748358,525,SM67512,1994-9-28,,,,长沙市,,,王先生,父子',
  '2016-4-6,胡蓉,15367952111,320,MF49464,1985-5-22,建筑工程,,大众,长沙市,天心区,通用时代,唐先生,夫妻  ',
  '2016-4-6,李蓉,13908453308,525,SM65731,1985-10-14,,个体户,,长沙市,天心区,怡海星城6栋1509,李勇,夫妻  ',
  '2016-4-7,彭艳红,13517489435,X1,ME52436,1982-5-11,,个体户,,长沙市,雨花区,香樟路,张先生,',
  '2016-4-7,张海燕,18627585360,525,SM67432,1988-12-16,教育,老师,,长沙市,芙蓉区,古曲路,陈先生,父子',
  '2016-4-7,陈泽邦,15116400492,320,MF51544,1990-3-25,,个体户,,长沙市,雨花区,时代阳光大道,,',
  '2016-4-7,尹虹,18975811800,320,MF27254,1984-10-16,其他,个体户,,长沙市,雨花区,新建东路阳光小城2栋2502,陈先生,',
  '2016-4-7,钟伟,13348613318,520,SL57670,1976-10-1,其他,,,长沙市,芙蓉区,东二环1032,高女士,夫妻',
  '2016-4-8,何岸,18673090782,525,SM65455,1989-7-26,金融保险,其他,,长沙市,天心区,>芙蓉南路1号隆尊品10栋1601,谭先生,夫妻',
  '2016-4-8,胡先生,18692222737,525,SM61979,1985-4-24,,个体户,,长沙市,雨花区,韶山路,李女士,',
  '2016-4-8,陈耘,18684856262,MINI,2B25529,1991-12-3,金融保险,>服务人员,,长沙市,天心区,蔡鄂南路天心华庭,李女士,母子  ',
  '2016-4-8,何少林,15674883157,118,5C87017,1987-6-6,金融保险,其他,,长沙市,芙蓉区,车站北路70号,彭女士,姐妹',
  '2016-4-8,曾超,15717388088,525,SM65139,1990-2-1,,其他,,娄底市,新化县,,曾女士,男朋友'
];

var body = document.getElementById('rows');
records.forEach(function (record, i) {
  var f = record.split(',');
  var model = /^\d+$/.test(f[3]) ? f[3] + ' ' : f[3];
  var cells = [i + 1 + ' ', f[0], f[1], f[1], '', f[2] + ' ', '', model, f[4], f[5], f[6], f[7], f[8], '',
    '电话', '短信', '', '', '湖南省', f[9], f[10], f[11], '', f[12], f[13], ''];
  var tr = body.insertRow();
  var th = document.createElement('th');
  th.className = 'no';
  th.textContent = i + 6;
  tr.appendChild(th);
  if (i === 5) tr.className = 'sel-row';
  cells.forEach(function (text, c) {
    var td = tr.insertCell();
    var span = document.createElement('span');
    if (text[0] === '>') {
      td.classList.add('spill');
      text = text.slice(1);
    }
    if (/^[\x20-\x7e]+$/.test(text)) span.className = 'num';
    if (i === 5 && c === 9) td.classList.add('cursor');
    span.textContent = text;
    td.appendChild(span);
  });
});
```
